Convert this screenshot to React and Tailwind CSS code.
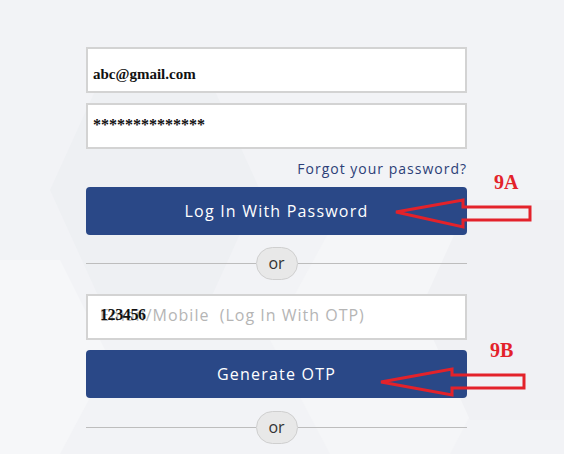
import React from 'react';

const sans = "font-['Open_Sans',_'Liberation_Sans',_sans-serif]";
const serif = "font-['Liberation_Serif',_'Times_New_Roman',_serif]";

function Divider() {
    return (
        <div className="flex items-center h-[34px]">
            <div className="flex-1 h-px bg-[#bdbdbd]" />
            <div className={`w-[42px] h-[33px] rounded-full bg-[#e8e8e8] border border-[#cfcfcf] flex items-center justify-center text-[16px] text-[#333] ${sans}`}>
                or
            </div>
            <div className="flex-1 h-px bg-[#bdbdbd]" />
        </div>
    );
}

export default function App() {
    return (
        <div className="relative w-[564px] h-[454px] overflow-hidden bg-[#f2f3f6]">
            {/* faint hexagon backdrop */}
            <svg className="absolute inset-0" width="564" height="454" viewBox="0 0 564 454">
                <polygon points="100,80 210,80 260,190 210,300 100,300 50,190" fill="#eef0f3" />
                <polygon points="330,230 450,230 510,340 450,454 330,454 270,340" fill="#f5f6f8" />
                <polygon points="470,200 564,200 564,420 470,420 420,310" fill="#f0f1f4" />
                <polygon points="0,260 60,260 110,360 60,454 0,454" fill="#f6f7f9" />
            </svg>

            <div className="relative ml-[86px] w-[381px] pt-[47px] flex flex-col">
                {/* email */}
                <div className="h-[46px] bg-white border-2 border-[#d3d3d3] pl-[5px] pt-[12px]">
                    <span className={`text-[15px] font-bold text-[#111] ${serif}`}>abc@gmail.com</span>
                </div>

                {/* password */}
                <div className="mt-[10px] h-[46px] bg-white border-2 border-[#d3d3d3] pl-[5px] pt-[7px]">
                    <span className={`text-[16px] font-bold text-[#111] ${serif}`}>**************</span>
                </div>

                <div className="h-[38px] flex items-center justify-end">
                    <a className={`text-[14px] tracking-[1px] text-[#2d3f78] ${sans}`}>Forgot your password?</a>
                </div>

                <button className={`h-[48px] rounded-[4px] bg-[#2a4887] text-white text-[16px] tracking-[1.2px] ${sans}`}>
                    Log In With Password
                </button>

                <div className="mt-[11px]">
                    <Divider />
                </div>

                {/* otp */}
                <div className="mt-[14px] h-[46px] bg-white border-2 border-[#d3d3d3] relative flex items-center pl-[12px] pb-[5px]">
                    <span className={`text-[16px] tracking-[1px] text-[#b5b5b5] ${sans}`}>Email/Mobile&nbsp; (Log In With OTP)</span>
                    <span className={`absolute left-[12px] top-[7px] text-[16px] font-bold tracking-[-0.4px] text-[#111] ${serif}`}>123456</span>
                </div>

                <button className={`mt-[10px] h-[48px] rounded-[4px] bg-[#2a4887] text-white text-[16px] tracking-[1.2px] ${sans}`}>
                    Generate OTP
                </button>

                <div className="mt-[12px]">
                    <Divider />
                </div>
            </div>

            {/* annotations */}
            <span className={`absolute left-[494px] top-[167px] text-[20px] font-bold text-[#e3222a] ${serif}`}>9A</span>
            <span className={`absolute left-[490px] top-[335px] text-[20px] font-bold text-[#e3222a] ${serif}`}>9B</span>
            <svg className="absolute inset-0 pointer-events-none" width="564" height="454" viewBox="0 0 564 454">
                <polygon
                    points="396,212 463,200 463,207 530,207 530,220 463,220 463,227"
                    fill="none"
                    stroke="#e3222a"
                    strokeWidth="3"
                    strokeLinejoin="miter"
                />
                <polygon
                    points="381,382 452,369 452,375 524,375 524,388 452,388 452,395"
                    fill="none"
                    stroke="#e3222a"
                    strokeWidth="3"
                    strokeLinejoin="miter"
                />
            </svg>
        </div>
    );
}
